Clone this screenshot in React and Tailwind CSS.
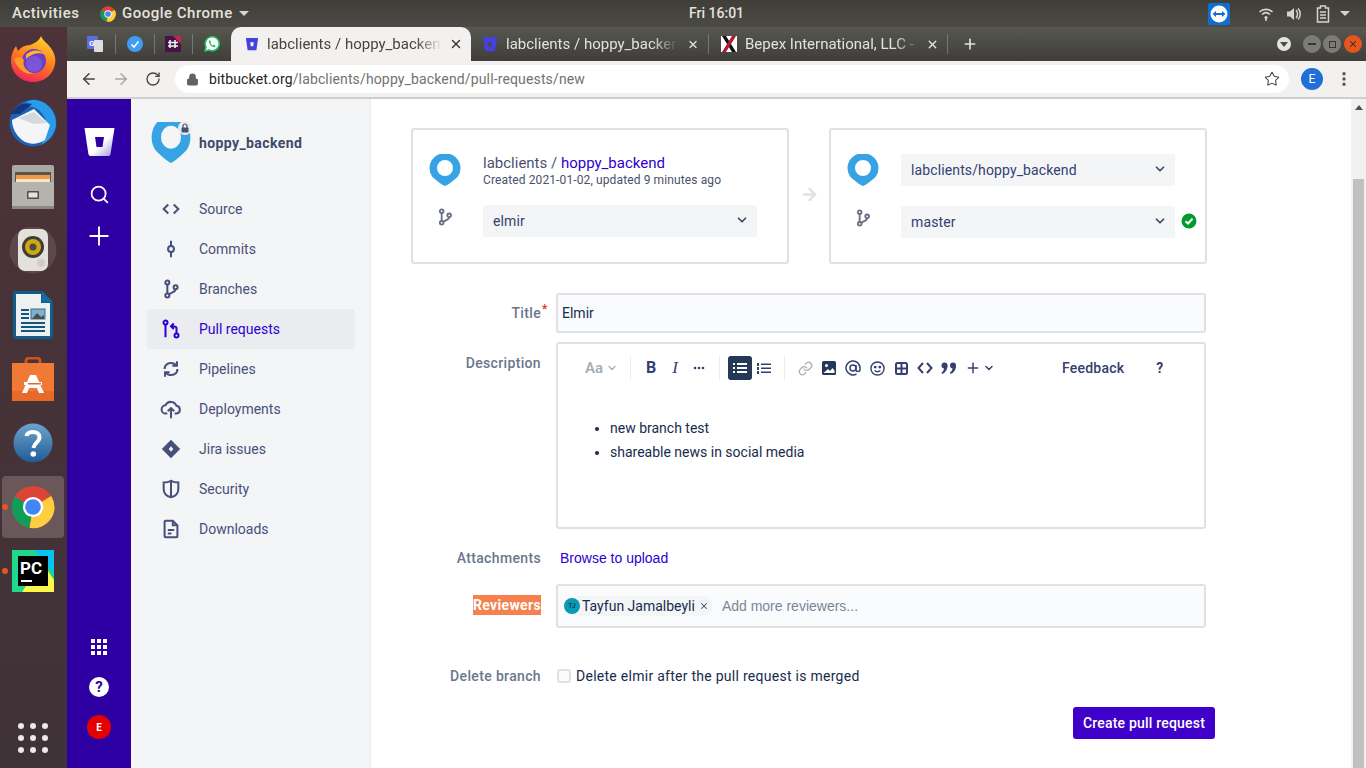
import React from "react";
import { ArrowLeft, ArrowRight, ChevronDown, Link as LinkIcon, Lock, MoreVertical, Plus, RotateCw, Search, Star, X } from "lucide-react";

const ubuntu = "font-['Roboto',sans-serif]";
const fade = "[mask-image:linear-gradient(to_right,black_85%,transparent)]";

function ChromeIcon({ size = 16 }) {
  return (
    <svg width={size} height={size} viewBox="0 0 48 48">
      <circle cx="24" cy="24" r="23" fill="#db4437" />
      <path d="M24 24 L44 12 A23 23 0 0 1 20 46.7 Z" fill="#ffcd40" />
      <path d="M24 24 L20 46.7 A23 23 0 0 1 4 12.5 Z" fill="#0f9d58" />
      <circle cx="24" cy="24" r="11" fill="#fff" />
      <circle cx="24" cy="24" r="8.5" fill="#4285f4" />
    </svg>
  );
}

function Firefox() {
  return (
    <svg width="46" height="48" viewBox="0 0 46 48">
      <defs>
        <linearGradient id="ffa" x1="0.7" y1="0" x2="0.3" y2="1">
          <stop offset="0" stopColor="#ffd52e" />
          <stop offset="0.5" stopColor="#ff7a1c" />
          <stop offset="1" stopColor="#f0245a" />
        </linearGradient>
      </defs>
      <path d="M31 1 C33 6 37 8 40 12 C45 18 46 24 45 29 C43 40 34 47 23 47 C11 47 1 38 1 26 C1 20 3 15 6 11 L8 16 C11 12 15 10 20 10 C25 8 29 6 31 1 Z" fill="url(#ffa)" />
      <circle cx="24" cy="26" r="12" fill="#6d3fc0" />
      <circle cx="24" cy="29" r="8" fill="#7b55d6" />
      <path d="M4 24 C7 33 14 40 24 39 C16 36 12 31 14 25 C12 22 8 21 4 24 Z" fill="#ff9a24" />
      <path d="M16 20 C21 14 30 14 36 20 C30 17 22 18 16 24 Z" fill="#ffb52c" />
    </svg>
  );
}

function Thunderbird() {
  return (
    <svg width="48" height="48" viewBox="0 0 48 48">
      <circle cx="24" cy="24" r="23.5" fill="#1b62b8" />
      <path d="M24 1 C36 1 47 11 47 24 C47 34 40 42 32 46 C39 36 41 22 31 12 C27 8 19 6 13 8 C16 3 20 1 24 1 Z" fill="#2a9be6" />
      <path d="M3 21 L25 10 L41 26 L36 41 C28 46 20 46 13 41 C7 36 3 29 3 21 Z" fill="#f4f5f7" />
      <path d="M9 19 L25 25 L38 24 L25 13 Z" fill="#d5d9df" />
      <path d="M2 15 C8 5 16 3 23 5 L11 15 Z" fill="#14377f" />
    </svg>
  );
}

function Files() {
  return (
    <svg width="42" height="44" viewBox="0 0 42 44">
      <rect x="0" y="0" width="42" height="44" rx="2" fill="#a9a8a3" />
      <rect x="3" y="7" width="36" height="13" fill="#59544c" />
      <rect x="4" y="10" width="34" height="8" fill="#f29a4a" />
      <rect x="4" y="14" width="34" height="3" fill="#fbe3c5" />
      <rect x="0" y="17" width="42" height="27" rx="1" fill="#b4b3ae" />
      <rect x="0" y="41" width="42" height="3" fill="#8a8985" />
      <rect x="15" y="26" width="12" height="8" rx="1" fill="#4e4d49" />
      <rect x="16.5" y="27.5" width="9" height="5" fill="#e4e4e2" />
    </svg>
  );
}

function Speaker() {
  return (
    <svg width="48" height="48" viewBox="0 0 48 48">
      <circle cx="24" cy="23" r="23.5" fill="#6b5a5c" opacity="0.55" />
      <rect x="9" y="2" width="30" height="42" rx="7" fill="#e3e1d9" />
      <circle cx="24" cy="20" r="11" fill="#3f3c38" />
      <circle cx="24" cy="20" r="8" fill="#cdaa14" />
      <circle cx="24" cy="20" r="3.5" fill="#4e4b42" />
      <circle cx="32" cy="36" r="4" fill="#cfcdc5" />
    </svg>
  );
}

function Writer() {
  return (
    <svg width="40" height="48" viewBox="0 0 40 48">
      <path d="M2 0 H28 L40 12 V45 a3 3 0 0 1 -3 3 H3 a3 3 0 0 1 -3 -3 V2 a2 2 0 0 1 2 -2 Z" fill="#0f5d8b" />
      <path d="M3 3 H28 V12 H37 V45 H3 Z" fill="#eef1f1" />
      <path d="M29 0 L40 11 H29 Z" fill="#0f6ca6" />
      <rect x="18" y="18" width="14" height="10" fill="#7fb1cc" stroke="#3c6e8c" />
      <path d="M19 28 L24 22 L28 26 L31 24 V28 Z" fill="#4d4d4d" />
      <g fill="#11577f">
        <rect x="8" y="18" width="8" height="2" />
        <rect x="8" y="22" width="8" height="2" />
        <rect x="8" y="26" width="8" height="2" />
        <rect x="8" y="31" width="24" height="2" />
        <rect x="8" y="35" width="24" height="2" />
        <rect x="8" y="39" width="24" height="2" />
      </g>
    </svg>
  );
}

function Software() {
  return (
    <svg width="42" height="44" viewBox="0 0 42 44">
      <path d="M14 8 V4 a3 3 0 0 1 3 -3 H25 a3 3 0 0 1 3 3 V8" fill="none" stroke="#c9541c" strokeWidth="3" />
      <rect x="0" y="6" width="42" height="38" fill="#f07a35" />
      <rect x="0" y="34" width="42" height="10" fill="#e8692a" />
      <path d="M18 18 H24 L32 36 H27 L25 31 H17 L15 36 H10 Z" fill="#fff" />
      <rect x="12" y="25" width="18" height="3" fill="#fff" />
      <rect x="16" y="26" width="13" height="1.5" fill="#e8692a" />
    </svg>
  );
}

function HelpDock() {
  return (
    <svg width="40" height="40" viewBox="0 0 40 40">
      <defs>
        <linearGradient id="hlp" x1="0" y1="0" x2="0" y2="1">
          <stop offset="0" stopColor="#6ea3cd" />
          <stop offset="1" stopColor="#1f5c96" />
        </linearGradient>
      </defs>
      <circle cx="20" cy="20" r="19.5" fill="url(#hlp)" />
      <path d="M13.5 13 C14 8 26 7 26.5 14 C27 19 21 19.5 20.5 25" fill="none" stroke="#fff" strokeWidth="4" />
      <circle cx="20.3" cy="31" r="2.8" fill="#fff" />
    </svg>
  );
}

function PyCharm() {
  return (
    <svg width="42" height="42" viewBox="0 0 42 42">
      <rect width="42" height="42" fill="#21d789" />
      <path d="M22 0 H42 V24 Z" fill="#07c3f2" />
      <path d="M30 12 L42 30 V42 H10 Z" fill="#fcf84a" />
      <rect x="6" y="6" width="30" height="30" fill="#000" />
      <rect x="9" y="30" width="11" height="2" fill="#fff" />
      <text x="8" y="24" fill="#fff" fontFamily="Roboto" fontWeight="700" fontSize="17">PC</text>
    </svg>
  );
}

function Pin({ width = 32, height = 32 }) {
  return (
    <svg width={width} height={height} viewBox="0 0 32 32" preserveAspectRatio="none">
      <path fillRule="evenodd" d="M16 32 C13 31 8 27 3.5 23 A15.5 15 0 1 1 28.5 23 C24 27 19 31 16 32 Z M16 6 A8 8 0 1 0 16 22 A8 8 0 1 0 16 6 Z" fill="#38a3e4" />
    </svg>
  );
}

function BitbucketLogo() {
  return (
    <svg width="31" height="28" viewBox="0 0 31 28">
      <defs>
        <linearGradient id="bb" x1="0.2" y1="0.2" x2="1" y2="1">
          <stop offset="0.45" stopColor="#fff" />
          <stop offset="1" stopColor="#9a92e0" />
        </linearGradient>
      </defs>
      <path fillRule="evenodd" d="M0.5 0 H30.5 L26.5 26 Q26.3 28 24.5 28 H6.5 Q4.7 28 4.4 26 Z M11 9 L12.5 19 H18.5 L20 9 Z" fill="url(#bb)" />
    </svg>
  );
}

// small nav icons, 24 grid
const navIcons = {
  source: <path d="M9 7 L4 12 L9 17 M15 7 L20 12 L15 17" fill="none" stroke="currentColor" strokeWidth="2.2" />,
  commits: (
    <g fill="none" stroke="currentColor" strokeWidth="2.2">
      <circle cx="12" cy="12" r="3.2" />
      <path d="M12 3 V8.8 M12 15.2 V21" />
    </g>
  ),
  branches: (
    <g fill="none" stroke="currentColor" strokeWidth="2.2">
      <circle cx="8" cy="5" r="2.2" />
      <circle cx="8" cy="19" r="2.2" />
      <circle cx="17" cy="10" r="2.2" />
      <path d="M8 7 V17 M17 12 C17 16 12 15 10 18" />
    </g>
  ),
  pulls: (
    <g fill="none" stroke="currentColor" strokeWidth="2.2">
      <circle cx="6" cy="5" r="2.2" />
      <path d="M6 7.2 V21" />
      <circle cx="18" cy="19" r="2.2" />
      <path d="M18 16.8 V11 C18 9 16 9 13 9 M15 6 L12 9 L15 12" />
    </g>
  ),
  pipelines: (
    <g fill="none" stroke="currentColor" strokeWidth="2.2">
      <path d="M5 12 C5 7 10 4 15 6 L18 8 M19 12 C19 17 14 20 9 18 L6 16" />
      <path d="M18.5 3.5 V8.5 H13.5 M5.5 20.5 V15.5 H10.5" />
    </g>
  ),
  deployments: (
    <g fill="none" stroke="currentColor" strokeWidth="2.2">
      <path d="M8 17 H6.5 A4.5 4.5 0 0 1 6 8 A6.5 6.5 0 0 1 18 8.5 A4.3 4.3 0 0 1 18 17 H16" />
      <path d="M12 22 V11 M8.5 14.5 L12 11 L15.5 14.5" />
    </g>
  ),
  jira: <path fillRule="evenodd" d="M12 2 L22 12 L12 22 L2 12 Z M12 9 L9.5 12 L12 15 L14.5 12 Z" fill="currentColor" />,
  security: (
    <g fill="none" stroke="currentColor" strokeWidth="2.2">
      <path d="M12 3 C15 5 17 5 20 5 V12 C20 17 16 20 12 21 C8 20 4 17 4 12 V5 C7 5 9 5 12 3 Z" />
      <path d="M12 3 V21" />
    </g>
  ),
  downloads: (
    <g fill="none" stroke="currentColor" strokeWidth="2.2">
      <path d="M6 3 H14 L19 8 V20 a1 1 0 0 1 -1 1 H6 a1 1 0 0 1 -1 -1 V4 a1 1 0 0 1 1 -1 Z" />
      <path d="M14 3 V8 H19 M8.5 13 H15.5 M8.5 17 H12.5" />
    </g>
  ),
};

const navItems = [
  ["Source", "source"],
  ["Commits", "commits"],
  ["Branches", "branches"],
  ["Pull requests", "pulls"],
  ["Pipelines", "pipelines"],
  ["Deployments", "deployments"],
  ["Jira issues", "jira"],
  ["Security", "security"],
  ["Downloads", "downloads"],
];

function TopBar() {
  return (
    <div className="h-[27px] shrink-0 flex items-center bg-gradient-to-b from-[#3f3e39] to-[#4b4a44] text-[#e4e2dd] text-[15px] tracking-[0.5px] font-medium relative">
      <span className="ml-[12px] w-[88px]">Activities</span>
      <ChromeIcon size={16} />
      <span className="ml-[6px]">Google Chrome</span>
      <span className="ml-[6px] w-0 h-0 border-x-[5px] border-x-transparent border-t-[5px] border-t-[#d6d4cf]" />
      <span className="absolute left-[689px] top-[3px] text-[14px] tracking-normal">Fri 16:01</span>
      <div className="ml-auto flex items-center">
        <div className="w-[22px] h-[22px] rounded-[2px] flex items-center justify-center bg-[#0e6fd0]">
          <svg width="18" height="18" viewBox="0 0 18 18">
            <circle cx="9" cy="9" r="8.5" fill="#fff" />
            <path d="M2.5 9 L6 6 V8 H12 V6 L15.5 9 L12 12 V10 H6 V12 Z" fill="#0e6fd0" />
          </svg>
        </div>
        <svg className="ml-[28px]" width="16" height="16" viewBox="0 0 16 16" fill="none" stroke="#d6d4cf" strokeWidth="1.6">
          <path d="M1.5 6 C5 2.5 11 2.5 14.5 6 M4 8.5 C6.5 6.2 9.5 6.2 12 8.5" />
          <circle cx="8" cy="11.5" r="1.6" fill="#d6d4cf" stroke="none" />
          <path d="M8 11.5 V15" />
        </svg>
        <svg className="ml-[12px]" width="16" height="16" viewBox="0 0 16 16" fill="#d6d4cf">
          <path d="M1 5.5 H4 L8 2 V14 L4 10.5 H1 Z" />
          <path d="M10 4 C12 6 12 10 10 12 M12 2.5 C15 5.5 15 10.5 12 13.5" fill="none" stroke="#d6d4cf" strokeWidth="1.5" />
        </svg>
        <svg className="ml-[14px]" width="14" height="18" viewBox="0 0 14 18" fill="none" stroke="#d6d4cf" strokeWidth="1.5">
          <path d="M4.5 1 H9.5 V3 H12.5 V17 H1.5 V3 H4.5 Z" />
          <path d="M4 7 H10 M4 10 H10 M4 13 H10" />
        </svg>
        <span className="ml-[10px] mr-[16px] w-0 h-0 border-x-[5px] border-x-transparent border-t-[5px] border-t-[#d6d4cf]" />
      </div>
    </div>
  );
}

function Favicon({ size = 16 }) {
  return (
    <svg width={size} height={size} viewBox="0 0 16 16" className="shrink-0">
      <path fillRule="evenodd" d="M1 1 H15 L13 15 H3 Z M6 6 L6.6 10.5 H9.4 L10 6 Z" fill="#4540e0" />
    </svg>
  );
}

function TabStrip() {
  return (
    <div className="h-[34px] shrink-0 flex items-center bg-gradient-to-b from-[#575750] to-[#3f3e3a] text-[#e3e2dd] text-[15px]">
      <div className="w-[164px] flex items-center shrink-0 pl-[19px]">
        <div className="w-[19px] flex justify-center">
          <svg width="16" height="16" viewBox="0 0 16 16">
            <rect x="0" y="0" width="11" height="13" rx="1" fill="#5b6ee1" />
            <rect x="7" y="4" width="9" height="12" rx="1" fill="#dfdfdf" />
            <text x="2" y="10" fontSize="8" fill="#fff" fontFamily="Roboto" fontWeight="700">G</text>
          </svg>
        </div>
        <div className="w-[1px] h-[20px] bg-[#77766f] ml-[10px]" />
        <div className="w-[38px] flex justify-center">
          <svg width="16" height="16" viewBox="0 0 16 16">
            <circle cx="8" cy="8" r="8" fill="#3f9cf0" />
            <path d="M4.5 8.5 L7 11 L11.5 5.5" fill="none" stroke="#fff" strokeWidth="1.6" />
          </svg>
        </div>
        <div className="w-[1px] h-[20px] bg-[#77766f]" />
        <div className="w-[38px] flex justify-center">
          <svg width="16" height="16" viewBox="0 0 16 16">
            <rect width="16" height="16" fill="#451347" />
            <path d="M8 0 H16 V8 Z" fill="#c8224f" />
            <path d="M5 4 V12 M10 4 V12 M3 6.5 H13 M3 10 H13" stroke="#eee" strokeWidth="1.6" />
          </svg>
        </div>
        <div className="w-[1px] h-[20px] bg-[#77766f]" />
        <div className="w-[38px] flex justify-center">
          <svg width="16" height="16" viewBox="0 0 16 16">
            <path d="M1 15 L2 11 A7 7 0 1 1 5 14 Z" fill="#fff" stroke="#1fc15a" strokeWidth="1.5" />
            <path d="M5 4.5 C4 7 8 12 11.5 11 L11 9 L9.5 8.8 L8.8 9.5 C7.8 9 6.8 8 6.5 7 L7 6.2 L6.5 4.5 Z" fill="#1fc15a" />
          </svg>
        </div>
      </div>
      <div className="w-[240px] h-full shrink-0 bg-[#f2f1f0] rounded-t-[10px] flex items-center pl-[14px] pr-[8px] text-[#45443f] relative">
        <Favicon size={14} />
        <span className={`ml-[8px] w-[175px] shrink-0 whitespace-nowrap ${fade}`}>labclients / hoppy_backen</span>
        <X className="ml-auto" size={14} strokeWidth={2.5} color="#3c3b37" />
      </div>
      <div className="w-[238px] flex items-center pl-[11px] shrink-0">
        <Favicon />
        <span className={`ml-[8px] w-[172px] shrink-0 whitespace-nowrap ${fade}`}>labclients / hoppy_backen</span>
        <X className="ml-[9px]" size={13} strokeWidth={2.5} />
        <div className="w-[1px] h-[20px] bg-[#77766f] ml-[9px]" />
      </div>
      <div className="w-[239px] flex items-center pl-[12px] shrink-0">
        <svg width="16" height="16" viewBox="0 0 16 16" className="shrink-0">
          <rect width="16" height="16" fill="#fff" />
          <path d="M1 0 H5 L15 16 H11 Z" fill="#111" />
          <path d="M11 0 H15 L5 16 H1 Z" fill="#b01a33" />
        </svg>
        <span className={`ml-[8px] w-[176px] shrink-0 whitespace-nowrap ${fade}`}>Bepex International, LLC -</span>
        <X className="ml-[5px]" size={13} strokeWidth={2.5} />
        <div className="w-[1px] h-[20px] bg-[#77766f] ml-[8px]" />
      </div>
      <Plus size={16} strokeWidth={2.5} className="ml-[14px]" />
      <div className="ml-auto flex items-center mr-[4px]">
        <div className="w-[14px] h-[14px] rounded-full bg-[#e6e4df] flex items-center justify-center mr-[12px]">
          <span className="w-0 h-0 border-x-[4px] border-x-transparent border-t-[5px] border-t-[#4b4a44]" />
        </div>
        <div className="w-[18px] h-[18px] rounded-full bg-[#7c7b74] flex items-center justify-center mr-[2px]">
          <div className="w-[8px] h-[1.5px] bg-[#35342f]" />
        </div>
        <div className="w-[18px] h-[18px] rounded-full bg-[#7c7b74] flex items-center justify-center mr-[3px]">
          <div className="w-[7px] h-[7px] border border-[#35342f]" />
        </div>
        <div className="w-[18px] h-[18px] rounded-full bg-[#e6541f] flex items-center justify-center">
          <X size={10} strokeWidth={2.5} color="#3a2a20" />
        </div>
      </div>
    </div>
  );
}

function AddressBar() {
  return (
    <div className="h-[38px] shrink-0 flex items-center bg-[#f2f1f0] border-b-2 border-[#d0cfcc] text-[#45443f]">
      <ArrowLeft className="ml-[13px]" size={18} strokeWidth={2} />
      <ArrowRight className="ml-[14px]" size={18} strokeWidth={2} color="#a8a7a4" />
      <RotateCw className="ml-[15px]" size={16} strokeWidth={2} />
      <div className="ml-[14px] w-[1114px] h-[28px] bg-white rounded-full flex items-center">
        <Lock className="ml-[11px]" size={13} fill="#5f6368" color="#5f6368" />
        <span className="ml-[10px] text-[14px] tracking-[0.14px] text-[#73726e]">
          <span className="text-[#242424]">bitbucket.org</span>/labclients/hoppy_backend/pull-requests/new
        </span>
        <Star className="ml-auto mr-[9px]" size={16} strokeWidth={1.6} color="#4a4a48" />
      </div>
      <div className="ml-[12px] w-[22px] h-[22px] rounded-full bg-[#1f6fd6] text-white text-[12px] flex items-center justify-center">E</div>
      <MoreVertical className="ml-[12px]" size={18} strokeWidth={2.5} color="#55544f" />
    </div>
  );
}

function Dock() {
  const slot = "h-[64px] flex items-center justify-center pr-[1px]";
  return (
    <div className="w-[67px] shrink-0 flex flex-col bg-gradient-to-b from-[#4d3239] to-[#3e3337] relative">
      <div className={slot}><Firefox /></div>
      <div className={slot}><Thunderbird /></div>
      <div className={slot}><Files /></div>
      <div className={slot}><Speaker /></div>
      <div className={slot}><Writer /></div>
      <div className={slot}><Software /></div>
      <div className={slot}><HelpDock /></div>
      <div className={slot + " relative"}>
        <div className="w-[62px] h-[62px] rounded-[4px] bg-[#6a5759] flex items-center justify-center">
          <ChromeIcon size={44} />
        </div>
        <span className="absolute left-[2px] top-[29px] w-[6px] h-[6px] rounded-full bg-[#e95420]" />
      </div>
      <div className={slot + " relative"}>
        <PyCharm />
        <span className="absolute left-[2px] top-[29px] w-[6px] h-[6px] rounded-full bg-[#e95420]" />
      </div>
      <div className="mt-auto mb-[15px] ml-[18px] w-[30px] grid grid-cols-3 gap-[6px]">
        {[0, 1, 2, 3, 4, 5, 6, 7, 8].map((i) => (
          <span key={i} className="w-[6px] h-[6px] rounded-full bg-[#eeeae8]" />
        ))}
      </div>
    </div>
  );
}

function ProductNav() {
  return (
    <div className="w-[64px] shrink-0 bg-[#2e00a3] flex flex-col items-center pt-[29px] text-white">
      <BitbucketLogo />
      <Search className="mt-[28px]" size={21} strokeWidth={2} />
      <Plus className="mt-[16px]" size={30} strokeWidth={1.5} />
      <div className="mt-auto grid grid-cols-3 gap-[2px] w-[16px]">
        {[0, 1, 2, 3, 4, 5, 6, 7, 8].map((i) => (
          <span key={i} className="w-[4px] h-[4px] bg-white" />
        ))}
      </div>
      <div className="mt-[22px] w-[20px] h-[20px] rounded-full bg-white text-[#2e00a3] text-[15px] font-bold flex items-center justify-center leading-none">?</div>
      <div className="mt-[18px] mb-[29px] w-[24px] h-[24px] rounded-full bg-[#e60000] text-white text-[10px] font-bold flex items-center justify-center">E</div>
    </div>
  );
}

function RepoSidebar() {
  return (
    <div className="w-[240px] shrink-0 bg-[#f4f5f7] border-r border-[#ebecf0] pl-[16px] pr-[15px] text-[#42526e]">
      <div className="h-[90px] pt-[23px] flex items-start relative">
        <div className="ml-[4px] h-[41px] w-[40px] overflow-hidden shrink-0">
          <div className="mt-[-5px]"><Pin width={40} height={46} /></div>
        </div>
        <span className="ml-[8px] mt-[11px] text-[14px] font-bold tracking-[0.4px] text-[#3e4a68]">hoppy_backend</span>
        <div className="absolute left-[31px] top-[22px] w-[14px] h-[14px] rounded-full bg-[#ebecf0] flex items-center justify-center">
          <svg width="8" height="10" viewBox="0 0 8 10">
            <path d="M2 5 V3 a2 2 0 0 1 4 0 V5" fill="none" stroke="#42526e" strokeWidth="1.2" />
            <rect x="0.5" y="4.5" width="7" height="5" rx="1" fill="#42526e" />
          </svg>
        </div>
      </div>
      {navItems.map(([label, key]) => {
        const active = key === "pulls";
        return (
          <div
            key={key}
            className={`h-[40px] flex items-center rounded-[3px] pl-[13px] text-[14px] ${
              active ? "bg-[#ebecf0] text-[#2e00d0]" : "text-[#47507a]"
            }`}
          >
            <svg width="22" height="22" viewBox="0 0 24 24" className="shrink-0">{navIcons[key]}</svg>
            <span className="ml-[17px]">{label}</span>
          </div>
        );
      })}
    </div>
  );
}

function SelectBox({ children, className = "" }) {
  return (
    <div className={`h-[32px] w-[274px] bg-[#f4f5f7] rounded-[3px] flex items-center pl-[10px] pr-[8px] text-[14px] tracking-[0.12px] text-[#344070] ${className}`}>
      {children}
      <ChevronDown className="ml-auto mb-[3px]" size={14} strokeWidth={3} color="#3e4a68" />
    </div>
  );
}

function BranchIcon() {
  return (
    <svg width="20" height="20" viewBox="0 0 24 24" className="text-[#6b6f86]">{navIcons.branches}</svg>
  );
}

const toolIcon = "w-[24px] h-[24px] flex items-center justify-center shrink-0";

function Toolbar() {
  const sep = <div className="w-[1px] h-[24px] bg-[#ebecf0] shrink-0" />;
  return (
    <div className="h-[24px] mt-[12px] flex items-center text-[#344070] text-[14px]">
      <span className="ml-[27px] font-semibold text-[15px] text-[#a5adba]">Aa</span>
      <ChevronDown size={12} strokeWidth={2.5} color="#a5adba" className="ml-[3px]" />
      <div className="ml-[12px]">{sep}</div>
      <div className={`${toolIcon} ml-[8px] font-bold text-[16px]`}>B</div>
      <div className={`${toolIcon} italic font-['Liberation_Serif',serif] text-[17px]`}>I</div>
      <div className={`${toolIcon} font-bold`}>
        <svg width="12" height="4" viewBox="0 0 12 4" fill="currentColor"><circle cx="2" cy="2" r="1.3" /><circle cx="6" cy="2" r="1.3" /><circle cx="10" cy="2" r="1.3" /></svg>
      </div>
      <div className="ml-[8px]">{sep}</div>
      <div className="ml-[8px] w-[24px] h-[24px] rounded-[3px] bg-[#253858] flex items-center justify-center text-white shrink-0">
        <svg width="14" height="12" viewBox="0 0 14 12" fill="currentColor">
          <rect x="0" y="1" width="2" height="2" /><rect x="4" y="1" width="10" height="2" />
          <rect x="0" y="5" width="2" height="2" /><rect x="4" y="5" width="10" height="2" />
          <rect x="0" y="9" width="2" height="2" /><rect x="4" y="9" width="10" height="2" />
        </svg>
      </div>
      <div className={toolIcon}>
        <svg width="14" height="13" viewBox="0 0 14 13" fill="currentColor">
          <rect x="0" y="1" width="2" height="3" /><rect x="4" y="1.5" width="10" height="1.5" />
          <rect x="0" y="5" width="2" height="3" /><rect x="4" y="5.5" width="10" height="1.5" />
          <rect x="0" y="9" width="2" height="3" /><rect x="4" y="9.5" width="10" height="1.5" />
        </svg>
      </div>
      <div className="ml-[8px]">{sep}</div>
      <div className={`${toolIcon} ml-[8px]`}>
        <LinkIcon size={15} strokeWidth={2} color="#a5adba" />
      </div>
      <div className={toolIcon}>
        <svg width="14" height="14" viewBox="0 0 14 14">
          <rect width="14" height="14" rx="1.5" fill="#253858" />
          <circle cx="4.5" cy="4.5" r="1.5" fill="#fff" />
          <path d="M1.5 12 L6 8 L8 10 L10.5 7 L12.5 9.5 V12 Z" fill="#fff" />
        </svg>
      </div>
      <div className={`${toolIcon}`}>
        <svg width="16" height="16" viewBox="0 0 16 16" fill="none" stroke="currentColor" strokeWidth="1.5">
          <circle cx="8" cy="8" r="3" />
          <path d="M11 5 V9.5 a2 2 0 0 0 4 0 V8 A7 7 0 1 0 11.5 14" />
        </svg>
      </div>
      <div className={toolIcon}>
        <svg width="15" height="15" viewBox="0 0 16 16" fill="none" stroke="currentColor" strokeWidth="1.5">
          <circle cx="8" cy="8" r="7" />
          <circle cx="5.5" cy="6.5" r="0.8" fill="currentColor" />
          <circle cx="10.5" cy="6.5" r="0.8" fill="currentColor" />
          <path d="M5 10 C6.5 12 9.5 12 11 10" />
        </svg>
      </div>
      <div className={toolIcon}>
        <svg width="13" height="13" viewBox="0 0 13 13" fill="none" stroke="currentColor" strokeWidth="2">
          <rect x="1" y="1" width="11" height="11" rx="1.5" />
          <path d="M6.5 1 V12 M1 6.5 H12" />
        </svg>
      </div>
      <div className={toolIcon}>
        <svg width="16" height="12" viewBox="0 0 16 12" fill="none" stroke="currentColor" strokeWidth="2">
          <path d="M6 1 L1.5 6 L6 11 M10 1 L14.5 6 L10 11" />
        </svg>
      </div>
      <div className={toolIcon}>
        <svg width="16" height="12" viewBox="0 0 16 12" fill="currentColor">
          <circle cx="3.5" cy="3.5" r="3" /><path d="M6.5 3.5 C6.5 8 4 11 1 12 L0.5 10.5 C2 9.5 3 8 3 6 Z" />
          <circle cx="12" cy="3.5" r="3" /><path d="M15 3.5 C15 8 12.5 11 9.5 12 L9 10.5 C10.5 9.5 11.5 8 11.5 6 Z" />
        </svg>
      </div>
      <div className={toolIcon}>
        <Plus size={16} strokeWidth={2.2} />
      </div>
      <ChevronDown size={12} strokeWidth={3} className="ml-[-2px]" />
      <span className="ml-[67px] font-medium tracking-[0.2px]">Feedback</span>
      <span className="ml-[32px] font-bold">?</span>
    </div>
  );
}

function Label({ children, className = "" }) {
  return <div className={`w-[130px] shrink-0 text-right text-[14px] tracking-[0.35px] font-medium text-[#6b778c] ${className}`}>{children}</div>;
}

function CompareCards() {
  return (
    <div className="flex items-center">
      <div className="w-[378px] h-[136px] border-2 border-[#dfe1e6] rounded-[3px] pl-[16px] pt-[24px]">
        <div className="flex h-[32px] items-start">
          <div className="w-[54px] shrink-0"><Pin /></div>
          <div className="text-[#4a5070]">
            <div className="text-[15px] leading-[18px]">
              labclients / <span className="text-[#2e00d0]">hoppy_backend</span>
            </div>
            <div className="text-[12px] leading-[16px] tracking-[0.12px]">Created 2021-01-02, updated 9 minutes ago</div>
          </div>
        </div>
        <div className="flex mt-[19px]">
          <div className="w-[54px] shrink-0 pl-[6px] pt-[2px]"><BranchIcon /></div>
          <SelectBox>elmir</SelectBox>
        </div>
      </div>
      <div className="w-[40px] flex justify-center mb-[4px]">
        <ArrowRight size={19} strokeWidth={3} color="#dfe1e6" />
      </div>
      <div className="w-[378px] h-[136px] border-2 border-[#dfe1e6] rounded-[3px] pl-[16px] pt-[24px]">
        <div className="flex h-[32px]">
          <div className="w-[54px] shrink-0"><Pin /></div>
          <SelectBox>labclients/hoppy_backend</SelectBox>
        </div>
        <div className="flex mt-[20px] items-start">
          <div className="w-[54px] shrink-0 pl-[6px] pt-[2px]"><BranchIcon /></div>
          <SelectBox>master</SelectBox>
          <svg className="ml-[6px] mt-[7px]" width="16" height="16" viewBox="0 0 16 16">
            <circle cx="8" cy="8" r="7.5" fill="#009a2e" />
            <path d="M4.5 8.2 L7 10.5 L11.5 5.8" fill="none" stroke="#fff" strokeWidth="2" />
          </svg>
        </div>
      </div>
    </div>
  );
}

function PrForm() {
  return (
    <div className="flex-1 pl-[40px] pt-[29px] min-w-0">
      <CompareCards />
      <div className="flex items-center mt-[29px]">
        <Label className="mt-[1px]">
          <span className="relative">
            Title
            <span className="absolute left-full top-[-5px] ml-[1px] text-[#de350b] text-[12px]">*</span>
          </span>
        </Label>
        <div className="ml-[15px] w-[650px] h-[40px] border-2 border-[#dfe1e6] rounded-[3px] bg-[#fafbfc] flex items-center pl-[4px] text-[14px] text-[#172b4d]">Elmir</div>
      </div>
      <div className="flex mt-[9px]">
        <Label className="pt-[11px]">Description</Label>
        <div className="ml-[15px] w-[650px] h-[187px] border-2 border-[#dfe1e6] rounded-[3px]">
          <Toolbar />
          <ul className="mt-[36px] ml-[52px] list-disc text-[14px] leading-[24px] text-[#172b4d]">
            <li>new branch test</li>
            <li>shareable news in social media</li>
          </ul>
        </div>
      </div>
      <div className="flex items-center mt-[20px] h-[18px]">
        <Label>Attachments</Label>
        <span className="ml-[19px] text-[14px] text-[#2e00d0] font-['Liberation_Sans',sans-serif]">Browse to upload</span>
      </div>
      <div className="flex items-center mt-[17px]">
        <Label className="mb-[2px]">
          <span className="inline-block bg-[#f5814e] text-white font-bold leading-[20px]">Reviewers</span>
        </Label>
        <div className="ml-[15px] w-[650px] h-[44px] border-2 border-[#dfe1e6] rounded-[3px] bg-[#fafbfc] flex items-center pl-[6px]">
          <div className="h-[20px] flex items-center rounded-full bg-[#f4f5f7] text-[14px] text-[#172b4d] pr-[4px]">
            <span className="w-[16px] h-[16px] rounded-full bg-[#0a9ab5] text-[#0b4a5c] text-[7px] font-bold flex items-center justify-center">TJ</span>
            <span className="ml-[2px]">Tayfun Jamalbeyli</span>
            <X className="ml-[4px]" size={10} strokeWidth={2.5} color="#42526e" />
          </div>
          <span className="ml-[9px] text-[14px] text-[#7a869a] font-['Liberation_Sans',sans-serif]">Add more reviewers...</span>
        </div>
      </div>
      <div className="flex items-center mt-[38px] h-[20px]">
        <Label>Delete branch</Label>
        <span className="ml-[16px] w-[14px] h-[14px] border-2 border-[#dfe1e6] rounded-[3px] bg-[#fafbfc]" />
        <span className="ml-[5px] text-[14px] tracking-[0.27px] text-[#172b4d]">Delete elmir after the pull request is merged</span>
      </div>
      <div className="flex justify-end w-[804px] mt-[21px]">
        <div className="w-[142px] h-[32px] rounded-[3px] bg-[#3f00c9] text-white text-[14px] tracking-[0.2px] font-medium flex items-center justify-center">Create pull request</div>
      </div>
    </div>
  );
}

export default function App() {
  return (
    <div className={`w-[1366px] h-[768px] overflow-hidden flex flex-col ${ubuntu}`}>
      <TopBar />
      <div className="flex-1 flex min-h-0">
        <Dock />
        <div className="flex-1 flex flex-col min-w-0">
          <TabStrip />
          <AddressBar />
          <div className="flex-1 flex min-h-0 bg-white">
            <ProductNav />
            <RepoSidebar />
            <PrForm />
            <div className="w-[15px] shrink-0 bg-[#f1f1f1] flex flex-col items-center pt-[6px]">
              <span className="w-0 h-0 border-x-[4px] border-x-transparent border-b-[5px] border-b-[#505050]" />
              <div className="mt-[69px] w-[11px] flex-1 bg-[#c1c1c1]" />
            </div>
          </div>
        </div>
      </div>
    </div>
  );
}
